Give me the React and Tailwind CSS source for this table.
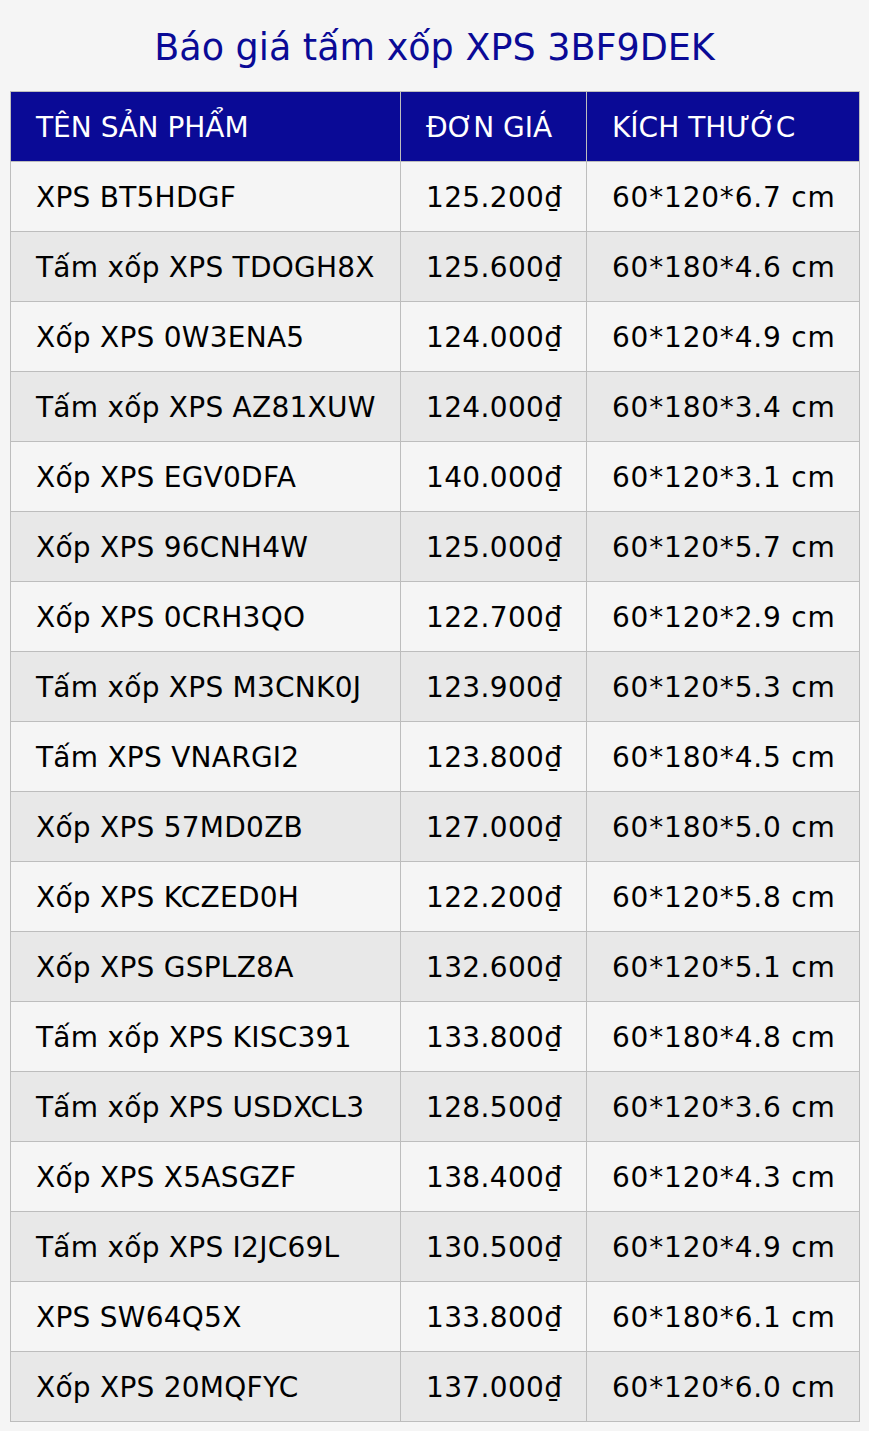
const rows = [
  ["XPS BT5HDGF", "125.200₫", "60*120*6.7 cm"],
  ["Tấm xốp XPS TDOGH8X", "125.600₫", "60*180*4.6 cm"],
  ["Xốp XPS 0W3ENA5", "124.000₫", "60*120*4.9 cm"],
  ["Tấm xốp XPS AZ81XUW", "124.000₫", "60*180*3.4 cm"],
  ["Xốp XPS EGV0DFA", "140.000₫", "60*120*3.1 cm"],
  ["Xốp XPS 96CNH4W", "125.000₫", "60*120*5.7 cm"],
  ["Xốp XPS 0CRH3QO", "122.700₫", "60*120*2.9 cm"],
  ["Tấm xốp XPS M3CNK0J", "123.900₫", "60*120*5.3 cm"],
  ["Tấm XPS VNARGI2", "123.800₫", "60*180*4.5 cm"],
  ["Xốp XPS 57MD0ZB", "127.000₫", "60*180*5.0 cm"],
  ["Xốp XPS KCZED0H", "122.200₫", "60*120*5.8 cm"],
  ["Xốp XPS GSPLZ8A", "132.600₫", "60*120*5.1 cm"],
  ["Tấm xốp XPS KISC391", "133.800₫", "60*180*4.8 cm"],
  ["Tấm xốp XPS USDXCL3", "128.500₫", "60*120*3.6 cm"],
  ["Xốp XPS X5ASGZF", "138.400₫", "60*120*4.3 cm"],
  ["Tấm xốp XPS I2JC69L", "130.500₫", "60*120*4.9 cm"],
  ["XPS SW64Q5X", "133.800₫", "60*180*6.1 cm"],
  ["Xốp XPS 20MQFYC", "137.000₫", "60*120*6.0 cm"],
];

export default function App() {
  return (
    <div className="min-h-[1431px] bg-[#f5f5f5] px-[10px] font-['DejaVu_Sans',sans-serif]">
      {/* tiêu đề */}
      <h1 className="h-[91px] pt-[26px] text-center text-[36.5px] leading-[44px] text-[#0a0a96]">
        Báo giá tấm xốp XPS 3BF9DEK
      </h1>

      <table className="w-[849px] table-fixed border-collapse text-[28px]">
        <colgroup>
          <col className="w-[390px]" />
          <col className="w-[186px]" />
          <col className="w-[273px]" />
        </colgroup>
        <thead>
          <tr className="h-[70px] bg-[#0a0a96] text-white">
            <th className="border border-[#bdbdbd] px-[25px] pt-[3px] text-left font-normal">TÊN SẢN PHẨM</th>
            <th className="border border-[#bdbdbd] px-[25px] pt-[3px] text-left font-normal">ĐƠN GIÁ</th>
            <th className="border border-[#bdbdbd] px-[25px] pt-[3px] text-left font-normal">KÍCH THƯỚC</th>
          </tr>
        </thead>
        <tbody>
          {rows.map((r, i) => (
            <tr key={i} className={"h-[70px] text-black " + (i % 2 === 0 ? "bg-[#f5f5f5]" : "bg-[#e8e8e8]")}>
              <td className="border border-[#bdbdbd] px-[25px] pt-[2px] whitespace-nowrap tracking-[0.25px]">{r[0]}</td>
              <td className="border border-[#bdbdbd] px-[25px] pt-[2px] whitespace-nowrap tracking-[0.35px]">{r[1]}</td>
              <td className="border border-[#bdbdbd] px-[25px] pt-[2px] whitespace-nowrap tracking-[0.8px]">{r[2]}</td>
            </tr>
          ))}
        </tbody>
      </table>
    </div>
  );
}
